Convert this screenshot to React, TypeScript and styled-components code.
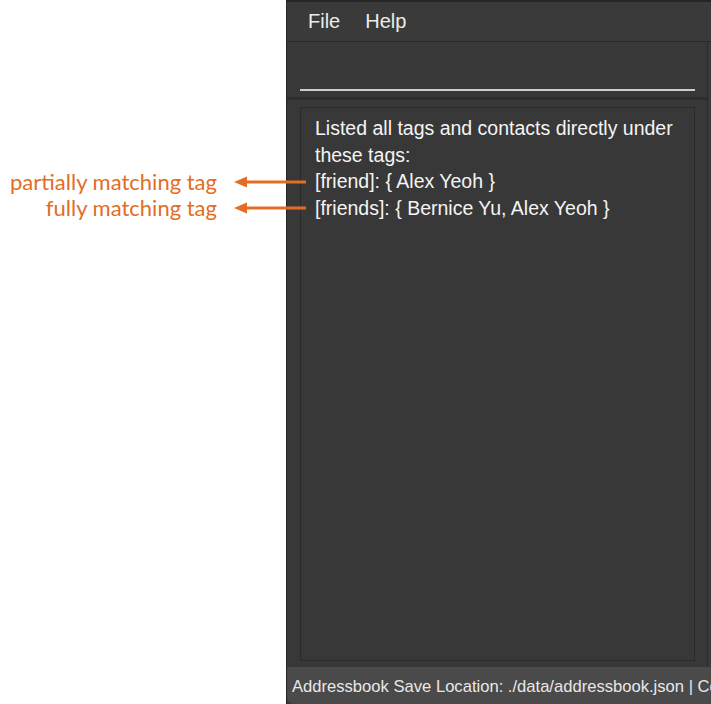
import React from "react";
import styled, { createGlobalStyle } from "styled-components";

const Global = createGlobalStyle`
  html, body { margin: 0; padding: 0; background: #ffffff; }
  body { font-family: "Liberation Sans", Arial, sans-serif; }
`;

const Page = styled.div`
  display: flex;
  width: 711px;
  height: 704px;
  overflow: hidden;
`;

const Annotations = styled.div`
  width: 286px;
  flex: none;
  padding-top: 169px;
  box-sizing: border-box;
  display: flex;
  flex-direction: column;
`;

const NoteRow = styled.div`
  display: flex;
  align-items: center;
  justify-content: flex-end;
  height: 26px;
`;

const NoteText = styled.span`
  font-family: Lato, "Open Sans", sans-serif;
  font-size: 22px;
  color: #e36d24;
  white-space: nowrap;
  line-height: 26px;
`;

const Arrow = styled.svg`
  flex: none;
  margin-left: 17px;
  margin-right: -20px;
  position: relative;
  z-index: 1;
`;

const Window = styled.div`
  flex: none;
  width: 425px;
  min-width: 0;
  height: 704px;
  overflow: hidden;
  display: flex;
  flex-direction: column;
  background: #3a3a3a;
  border-left: 1px solid #262626;
  border-top: 2px solid #262626;
  box-sizing: border-box;
  font-family: "Liberation Sans", Arial, sans-serif;
  color: #f2f2f2;
`;

const MenuBar = styled.div`
  height: 39px;
  flex: none;
  display: flex;
  align-items: center;
  gap: 25px;
  padding-left: 21px;
  border-bottom: 1px solid #2a2a2a;
  font-size: 20px;
  color: #ececec;
`;

const Content = styled.div`
  flex: 1;
  display: flex;
  flex-direction: column;
  margin-right: 3px;
  border-right: 1px solid #2a2a2a;
  min-height: 0;
  min-width: 0;
`;

const CommandPanel = styled.div`
  flex: none;
  display: flex;
  align-items: flex-end;
  height: 49px;
  padding: 0 12px 6px 13px;
  background: #383838;
  border-bottom: 3px solid #2e2e2e;
`;

const CommandInput = styled.div`
  flex: 1;
  height: 2px;
  background: #cdcdcd;
`;

const ResultPanel = styled.div`
  flex: 1;
  display: flex;
  padding: 7px 12px 6px 13px;
  background: #383838;
  min-height: 0;
`;

const ResultBox = styled.div`
  flex: 1;
  min-width: 0;
  border: 1px solid #2a2a2a;
  padding: 7px 12px 7px 14px;
  font-size: 19.5px;
  line-height: 26.5px;
  color: #f4f4f4;
`;

const StatusBar = styled.div`
  height: 37px;
  flex: none;
  display: flex;
  align-items: center;
  padding: 3px 0 0 5px;
  box-sizing: border-box;
  background: #4a4a4a;
  border-bottom-left-radius: 8px;
  font-size: 16.6px;
  color: #e8e8e8;
  white-space: nowrap;
  overflow: hidden;
`;

const ArrowIcon = () => (
  <Arrow width="72" height="14" viewBox="0 0 72 14">
    <line x1="11" y1="7" x2="72" y2="7" stroke="#e36d24" strokeWidth="3" />
    <polygon points="0,7 13,1.5 13,12.5" fill="#e36d24" />
  </Arrow>
);

export default function App() {
  return (
    <>
      <Global />
      <Page>
        <Annotations>
          <NoteRow>
            <NoteText>partially matching tag</NoteText>
            <ArrowIcon />
          </NoteRow>
          <NoteRow>
            <NoteText>fully matching tag</NoteText>
            <ArrowIcon />
          </NoteRow>
        </Annotations>
        <Window>
          <MenuBar>
            <span>File</span>
            <span>Help</span>
          </MenuBar>
          <Content>
            <CommandPanel>
              <CommandInput />
            </CommandPanel>
            <ResultPanel>
              <ResultBox>
                Listed all tags and contacts directly under these tags:
                <br />
                [friend]: {"{"} Alex Yeoh {"}"}
                <br />
                [friends]: {"{"} Bernice Yu, Alex Yeoh {"}"}
              </ResultBox>
            </ResultPanel>
          </Content>
          <StatusBar>Addressbook Save Location: ./data/addressbook.json | Contacts</StatusBar>
        </Window>
      </Page>
    </>
  );
}
